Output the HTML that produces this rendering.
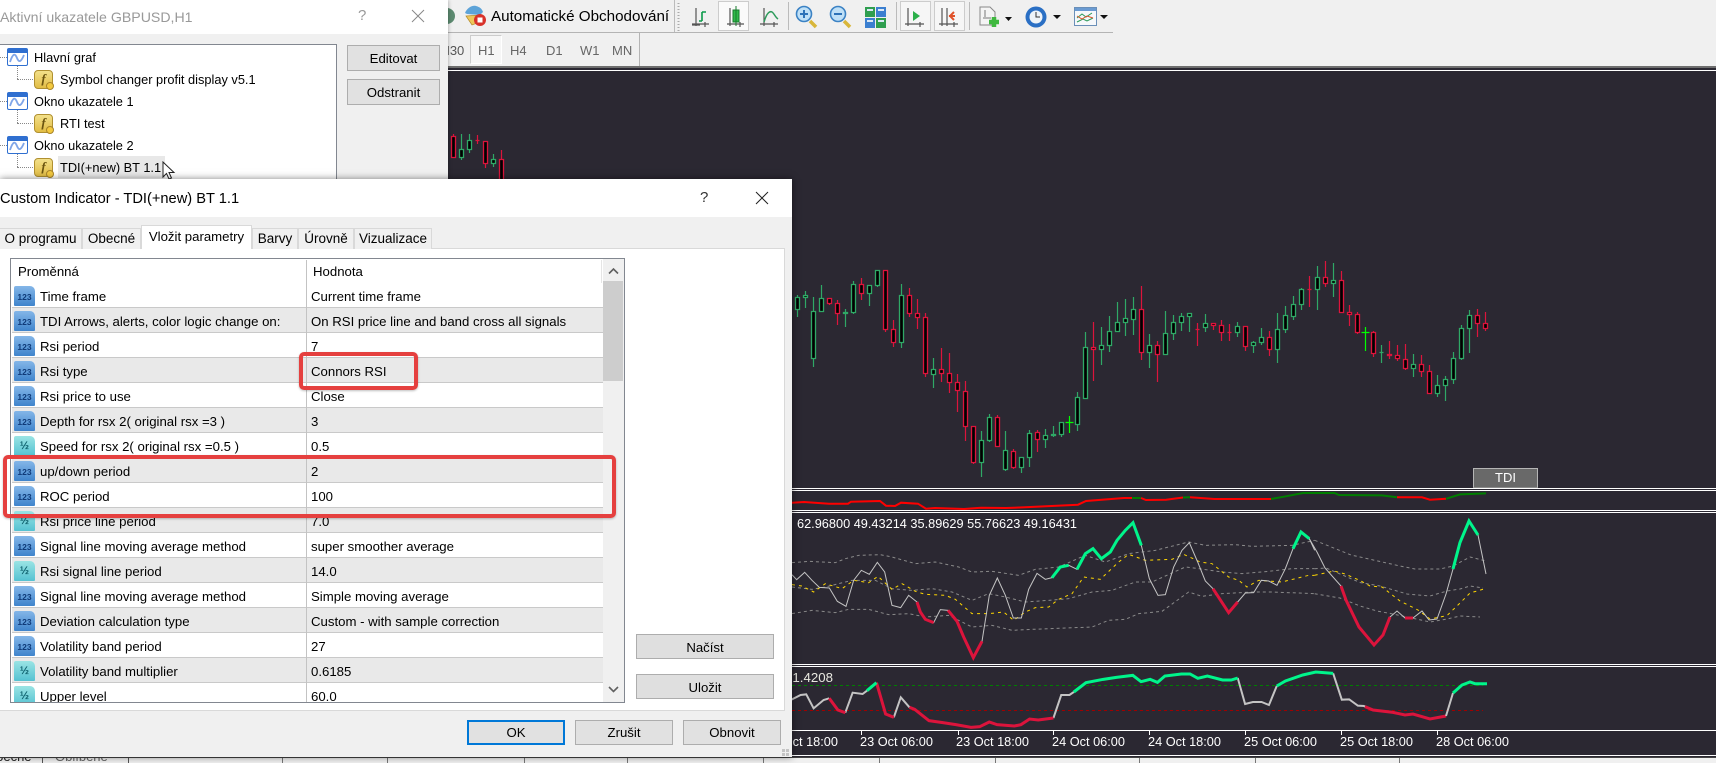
<!DOCTYPE html>
<html><head><meta charset="utf-8"><style>
html,body{margin:0;padding:0}
body{width:1716px;height:763px;position:relative;overflow:hidden;background:#f0f0f0;font-family:"Liberation Sans",sans-serif;color:#000}
.t{position:absolute;white-space:nowrap;font-size:13.2px;line-height:16px}
.btn{position:absolute;box-sizing:border-box;background:#e1e1e1;border:1px solid #adadad;font-size:13.2px;text-align:center;line-height:25px;color:#000}
.tab{position:absolute;box-sizing:border-box;top:228px;height:21px;background:#f0f0f0;border:1px solid #d9d9d9;border-bottom:0;font-size:13.5px;text-align:center;line-height:19px}
.row{position:absolute;left:11px;width:591px;height:25px;box-sizing:border-box;border-bottom:1px solid #c9c9c9;background:#fff;overflow:hidden}
.row.s{background:#e9e9e9}
.row b{position:absolute;font-weight:400;font-size:13.2px;line-height:27px;white-space:nowrap;left:28px;top:0}
.row u{position:absolute;text-decoration:none;font-size:13.2px;line-height:27px;white-space:nowrap;left:299px;top:0}
.row i{position:absolute;left:2px;top:3px;width:21px;height:20px;box-sizing:border-box;border-radius:2px 5px 1px 1px;background:linear-gradient(#84b6e8,#3f84cc);font:700 8.5px/10px "Liberation Sans",sans-serif;color:#0f3a78;text-align:center;padding-top:6px}
.row i.h{background:linear-gradient(#9ae4e4,#55c2d2);font-size:11px;color:#0d5f6b;padding-top:5px}
.coldiv{position:absolute;width:1px;background:#c3c3c3}
.tree{position:absolute;font-size:12.8px;line-height:16px;white-space:nowrap}
.f{position:absolute;width:19px;height:19px;box-sizing:border-box;border:1px solid #b09030;border-radius:4px;background:linear-gradient(#f3e08a,#e2bd45);font:italic 700 13px/16px "Liberation Serif",serif;text-align:center;color:#6b5410}
.f:after{content:"";position:absolute;right:-2px;bottom:-2px;width:6px;height:6px;border-radius:50%;background:#f3c93f;border:1px solid #a8842a}
.tf{position:absolute;top:43px;font-size:13px;line-height:16px;color:#666}
.dot{position:absolute;border-color:#888;border-style:dotted;border-width:0}
</style></head><body>

<!-- chart -->
<div style="position:absolute;left:448px;top:66px;width:1268px;height:691px;background:#2b2832"></div>
<div style="position:absolute;left:448px;top:66px;width:1268px;height:2px;background:#6e6e6e"></div>
<svg width="1716" height="763" style="position:absolute;left:0;top:0">
<g fill="#fff" shape-rendering="crispEdges">
<rect x="448" y="70" width="1268" height="1"/>
<rect x="448" y="488" width="1268" height="1"/><rect x="448" y="490" width="1268" height="1"/>
<rect x="448" y="510" width="1268" height="1"/><rect x="448" y="512" width="1268" height="1"/>
<rect x="448" y="664" width="1268" height="1"/><rect x="448" y="666" width="1268" height="1"/>
<rect x="448" y="730" width="1268" height="1"/><rect x="448" y="755" width="1268" height="1"/>
<rect x="861" y="731" width="1" height="4"/><rect x="958" y="731" width="1" height="4"/><rect x="1053" y="731" width="1" height="4"/><rect x="1149" y="731" width="1" height="4"/><rect x="1245" y="731" width="1" height="4"/><rect x="1341" y="731" width="1" height="4"/><rect x="1437" y="731" width="1" height="4"/>
</g>
<path fill="none" stroke="#2fa866" stroke-width="1.2" d="M461.500 134V160M469.500 134V153M493.500 154V167M797.500 295V317M805.500 291V308M813.500 297V367M821.500 285V312M845.500 309V327M853.500 281V314M869.500 285V306M877.500 270V287M901.500 284V348M933.500 358V388M981.500 431V477M989.500 414V442M1005.500 431V471M1021.500 457V473M1029.500 430V467M1045.500 429V448M1053.500 426V437M1061.500 422V437M1077.500 392V431M1085.500 332V399M1101.500 327V365M1109.500 316V352M1117.500 302V332M1125.500 299V336M1133.500 297V335M1149.500 334V368M1165.500 311V355M1173.500 315V340M1181.500 313V331M1189.500 313V332M1205.500 314V332M1237.500 322V337M1253.500 341V353M1261.500 328V345M1277.500 313V363M1285.500 306V333M1293.500 296V320M1301.500 288V310M1317.500 266V310M1333.500 263V297M1381.500 345V363M1413.500 354V377M1437.500 375V397M1445.500 376V401M1453.500 352V384M1461.500 325V360M1469.500 310V353"/>
<path fill="none" stroke="#dc143c" stroke-width="1.2" d="M453.500 134V158M477.500 135V144M485.500 141V168M829.500 298V305M837.500 300V325M861.500 278V300M885.500 270V332M893.500 320V347M909.500 288V317M917.500 299V329M925.500 313V377M941.500 348V382M949.500 353V393M957.500 374V412M965.500 381V441M973.500 426V464M997.500 415V447M1013.500 449V469M1037.500 430V452M1093.500 322V381M1141.500 286V360M1157.500 341V382M1197.500 323V346M1213.500 323V330M1221.500 320V341M1229.500 324V341M1245.500 326V351M1269.500 331V356M1309.500 276V307M1325.500 261V287M1341.500 271V313M1349.500 305V326M1357.500 312V334M1373.500 331V357M1389.500 341V359M1397.500 345V361M1405.500 344V370M1421.500 355V377M1429.500 365V394M1477.500 309V337M1485.500 312V331M501.500 150V160"/>
<path fill="none" stroke="#0f0" stroke-width="1.2" d="M1069.500 416V433M1065.500 422.500h8M1365.500 327V351M1361.500 332.500h8"/>
<path fill="#000" stroke="#2fa866" stroke-width="1.3" d="M459.500 149.500h4v8h-4zM467.500 140.500h4v9h-4zM491.500 159.500h4v4h-4zM795.500 297.500h4v12h-4zM803.500 295.500h4v2h-4zM811.500 311.500h4v47h-4zM819.500 298.500h4v13h-4zM843.500 312.500h4v1h-4zM851.500 284.500h4v28h-4zM867.500 285.500h4v8h-4zM875.500 270.500h4v15h-4zM899.500 295.500h4v47h-4zM931.500 369.500h4v5h-4zM979.500 440.500h4v22h-4zM987.500 417.500h4v23h-4zM1003.500 450.500h4v19h-4zM1019.500 457.500h4v10h-4zM1027.500 433.500h4v24h-4zM1043.500 435.500h4v4h-4zM1051.500 434.500h4v1h-4zM1059.500 422.500h4v12h-4zM1075.500 397.500h4v27h-4zM1083.500 347.500h4v51h-4zM1099.500 345.500h4v4h-4zM1107.500 331.500h4v14h-4zM1115.500 322.500h4v9h-4zM1123.500 318.500h4v4h-4zM1131.500 309.500h4v10h-4zM1147.500 345.500h4v7h-4zM1163.500 333.500h4v21h-4zM1171.500 322.500h4v11h-4zM1179.500 316.500h4v6h-4zM1187.500 313.500h4v3h-4zM1203.500 323.500h4v4h-4zM1235.500 326.500h4v6h-4zM1251.500 342.500h4v3h-4zM1259.500 337.500h4v5h-4zM1275.500 329.500h4v20h-4zM1283.500 315.500h4v14h-4zM1291.500 304.500h4v12h-4zM1299.500 289.500h4v15h-4zM1315.500 277.500h4v12h-4zM1331.500 280.500h4v3h-4zM1379.500 352.500h4v0h-4zM1411.500 364.500h4v4h-4zM1435.500 385.500h4v8h-4zM1443.500 379.500h4v6h-4zM1451.500 358.500h4v21h-4zM1459.500 328.500h4v30h-4zM1467.500 315.500h4v13h-4z"/>
<path fill="#000" stroke="#dc143c" stroke-width="1.3" d="M451.500 136.500h4v21h-4zM475.500 140.500h4v0h-4zM483.500 141.500h4v22h-4zM827.500 298.500h4v5h-4zM835.500 303.500h4v10h-4zM859.500 284.500h4v9h-4zM883.500 270.500h4v59h-4zM891.500 329.500h4v13h-4zM907.500 295.500h4v18h-4zM915.500 313.500h4v4h-4zM923.500 317.500h4v56h-4zM939.500 369.500h4v4h-4zM947.500 373.500h4v9h-4zM955.500 382.500h4v8h-4zM963.500 391.500h4v35h-4zM971.500 426.500h4v36h-4zM995.500 417.500h4v29h-4zM1011.500 451.500h4v16h-4zM1035.500 432.500h4v7h-4zM1091.500 347.500h4v2h-4zM1139.500 309.500h4v43h-4zM1155.500 345.500h4v9h-4zM1195.500 329.500h4v0h-4zM1211.500 323.500h4v2h-4zM1219.500 325.500h4v7h-4zM1227.500 332.500h4v0h-4zM1243.500 326.500h4v20h-4zM1267.500 337.500h4v12h-4zM1307.500 289.500h4v0h-4zM1323.500 277.500h4v6h-4zM1339.500 280.500h4v32h-4zM1347.500 312.500h4v2h-4zM1355.500 314.500h4v18h-4zM1371.500 332.500h4v21h-4zM1387.500 354.500h4v1h-4zM1395.500 355.500h4v3h-4zM1403.500 359.500h4v9h-4zM1419.500 364.500h4v7h-4zM1427.500 371.500h4v22h-4zM1475.500 315.500h4v8h-4zM1483.500 323.500h4v5h-4zM499.500 159.500h4v30h-4z"/>
<path fill="none" stroke="#007f00" d="M792 685.500H1483" stroke-dasharray="3 3" shape-rendering="crispEdges"/>
<path fill="none" stroke="#a00000" d="M792 710.500H1483" stroke-dasharray="3 3" shape-rendering="crispEdges"/>
</svg>

<svg width="1716" height="763" style="position:absolute;left:0;top:0">
<style>.n *{vector-effect:non-scaling-stroke;fill:none}</style>
<!-- indicator 1 -->
<g class="n" stroke-width="2">
<polyline stroke="#f00" points="792,502.700 804,502 829,503.700 848,503.700 851,501.700 880,501 886,505.700 895,506 901,502.700 918,503.700 926,508.700 935,508 964,509 981,507.700 1006,508 1025,507.300 1078,504.700 1086,501 1124,498 1132,498"/>
<polyline stroke="#007f00" points="1132,498 1141,498"/>
<polyline stroke="#f00" points="1141,498 1146,500 1166,499.700 1183,497.500"/>
<polyline stroke="#007f00" points="1183,497.500 1190,497.300"/>
<polyline stroke="#f00" points="1190,497.300 1214.500,499 1271,499"/>
<polyline stroke="#007f00" points="1271,499 1284,496.700 1303,493 1334.500,493 1339,495 1382,495.400 1397,497.300"/>
<polyline stroke="#f00" points="1397,497.300 1422,497.300 1430,499.700 1446,498.800"/>
<polyline stroke="#007f00" points="1446,498.800 1460,494.400 1486,493.400"/>
</g>
<!-- TDI bands -->
<g class="n" transform="translate(792 512) scale(.33333)">
<g stroke="#8a8a8a" stroke-width="1" stroke-dasharray="3 3">
<polyline points="0,152 50,148 130,152 160,140 200,130 265,128 300,135 370,155 430,150 500,165 540,180 600,178 680,190 730,172 800,165 880,130 940,150 1010,125 1090,115 1190,90 1240,100 1330,98 1380,103 1500,100 1568,85"/>
<polyline points="0,225 60,232 100,225 180,205 250,205 300,230 360,235 420,230 480,240 540,265 590,245 640,255 700,270 770,265 830,260 900,240 960,235 1030,210 1080,210 1180,165 1220,170 1290,180 1350,185 1430,178 1500,170 1568,170"/>
<polyline points="0,305 60,295 130,302 170,292 230,292 290,308 350,305 400,315 470,310 540,345 600,340 660,355 720,352 900,345 950,325 1000,322 1040,305 1110,298 1190,240 1230,253 1290,245 1380,240 1440,240 1568,245"/>
</g>
<polyline stroke="#ffd700" stroke-width="1" stroke-dasharray="3 4" points="0,218 30,222 65,240 100,215 150,230 185,205 230,212 258,193 300,232 330,215 370,238 400,247 460,250 490,262 540,305 590,305 635,300 665,325 700,300 730,287 770,285 800,262 840,245 875,195 925,202 980,150 1010,127 1060,145 1140,142 1175,127 1225,150 1260,155 1310,195 1340,205 1365,225 1400,205 1470,210 1550,190 1568,190"/>
<polyline stroke="#c4c4c4" stroke-width="1" points="0,188 14,203 38,181 60,205 82,226 112,228 136,268 162,283 185,205 208,175 232,187 256,151 278,180 300,280 326,287 350,250 375,270 385,300 400,322 425,332 445,293 468,295 495,328 515,375 544,437 570,388 592,250 616,198 640,250 664,318 688,318 710,232 735,184 760,202 780,197 805,165 830,160 855,172 880,125 903,110 928,140 955,120 975,85 1000,55 1023,32 1048,100 1072,200 1098,250 1120,248 1145,165 1170,115 1192,92 1217,150 1240,207 1263,230 1310,302 1337,270 1360,243 1385,242 1408,205 1430,207 1455,220 1480,170 1503,110 1527,60 1552,80 1568,115"/>
<g stroke="#dc143c" stroke-width="3">
<polyline points="375,270 385,300 400,322 425,332"/>
<polyline points="468,295 495,328 515,375 544,437 570,388"/>
<polyline points="1263,230 1310,302 1337,270"/>
</g>
<g stroke="#00f58b" stroke-width="3">
<polyline points="780,197 805,165 830,160"/>
<polyline points="855,172 880,125 903,110 928,140 955,120 975,85 1000,55 1023,32 1048,100"/>
<polyline points="1503,110 1527,60 1552,80"/>
</g>
</g>
<g class="n">
<g stroke="#8a8a8a" stroke-width="1" stroke-dasharray="3 3">
<polyline points="1314.700,540.300 1351,555 1360,557 1400,566 1415,569 1440,569 1453,566 1470,557 1486,561"/>
<polyline points="1314.700,568.700 1326,568 1360,582.500 1380,586 1407,594 1430,596 1447,591 1460,589 1470,586 1483,588"/>
<polyline points="1314.700,593.700 1340,598 1360,606 1377,611 1393,614 1430,622 1447,619 1460,616 1480,617"/>
</g>
<polyline stroke="#ffd700" stroke-width="1" stroke-dasharray="3 4" points="1314.700,575.300 1334,571 1345,574 1360,580.500 1370,586 1382,587 1400,601 1418,610 1430,619 1447,615.600 1460,603 1470,593 1484,589"/>
<polyline stroke="#c4c4c4" stroke-width="1" points="1309.300,538.700 1317,552 1325,568 1341,586 1346,600 1359,627 1374,645 1383,635 1390,617 1397,611 1405,618 1413,618 1422,611 1429,620 1437,619 1446,594 1453,569 1460,542.500 1469,521 1478,535 1486,574"/>
<polyline stroke="#dc143c" stroke-width="3" points="1341,586 1346,600 1359,627 1374,645 1383,635 1390,617"/>
<polyline stroke="#dc143c" stroke-width="3" points="1405,618 1413,618"/>
<polyline stroke="#00f58b" stroke-width="3" points="1453,569 1460,542.500 1469,521 1478,535"/>
</g>
<!-- bottom window -->
<g class="n" transform="translate(700 600) scale(.43365 .33333)">
<g stroke="#c4c4c4" stroke-width="2">
<polyline points="180,300 212,298 232,285 245,283 262,325 285,300 298,295"/>
<polyline points="335,338 352,278 375,282 385,272"/>
<polyline points="447,352 463,292 483,322"/>
<polyline points="815,354 833,285 852,285 862,276"/>
<polyline points="1240,234 1257,312 1275,306 1295,306 1312,315 1330,258"/>
<polyline points="1460,220 1480,299 1497,298 1517,317 1532,318"/>
</g>
<g stroke="#dc143c" stroke-width="3">
<polyline points="298,295 318,330 335,338"/>
<polyline points="407,248 428,342 447,352"/>
<polyline points="483,322 495,328 528,362 560,368 590,374 625,382 645,380 667,366 685,374 725,378 740,374 760,357 780,360 815,354"/>
</g>
<g stroke="#00f58b" stroke-width="3">
<polyline points="385,272 407,248"/>
<polyline points="862,276 890,248 930,238 960,232 998,226 1017,245 1038,238 1055,247 1072,228 1110,222 1130,222 1148,235 1170,228 1205,240 1225,240 1240,234"/>
<polyline points="1330,258 1350,243 1390,225 1420,216 1460,220"/>
</g>
</g>
<g class="n">
<polyline stroke="#c4c4c4" stroke-width="2" points="1364,706 1365,706.600"/>
<polyline stroke="#dc143c" stroke-width="3" points="1365,706.600 1373,710 1393,712.400 1405,715 1413,714 1430,719 1446,716"/>
<polyline stroke="#c4c4c4" stroke-width="2" points="1446,716 1453,693"/>
<polyline stroke="#00f58b" stroke-width="3" points="1453,693 1462,685 1470,682 1475,683.700 1487,683.700"/>
</g>
<g fill="#fff" font-family="Liberation Sans, sans-serif" font-size="13">
<text x="797" y="528" textLength="280" lengthAdjust="spacingAndGlyphs">62.96800 49.43214 35.89629 55.76623 49.16431</text>
<text x="785" y="682" textLength="48" lengthAdjust="spacingAndGlyphs" fill="#e8e8e0">51.4208</text>
<text x="765" y="746" textLength="73" lengthAdjust="spacingAndGlyphs">22 Oct 18:00</text>
<text x="860" y="746" textLength="73" lengthAdjust="spacingAndGlyphs">23 Oct 06:00</text>
<text x="956" y="746" textLength="73" lengthAdjust="spacingAndGlyphs">23 Oct 18:00</text>
<text x="1052" y="746" textLength="73" lengthAdjust="spacingAndGlyphs">24 Oct 06:00</text>
<text x="1148" y="746" textLength="73" lengthAdjust="spacingAndGlyphs">24 Oct 18:00</text>
<text x="1244" y="746" textLength="73" lengthAdjust="spacingAndGlyphs">25 Oct 06:00</text>
<text x="1340" y="746" textLength="73" lengthAdjust="spacingAndGlyphs">25 Oct 18:00</text>
<text x="1436" y="746" textLength="73" lengthAdjust="spacingAndGlyphs">28 Oct 06:00</text>
</g>
</svg>

<!-- TDI button -->
<div style="position:absolute;left:1473px;top:468px;width:65px;height:20px;box-sizing:border-box;background:#696969;border:1px solid #b5b5b5;border-bottom-color:#8a8a8a;color:#fff;font-size:13px;line-height:18px;text-align:center">TDI</div>

<!-- toolbar -->
<div style="position:absolute;left:448px;top:32px;width:665px;height:1px;background:#b4b4b4"></div>
<div style="position:absolute;left:639px;top:33px;width:1px;height:33px;background:#b4b4b4"></div>
<div style="position:absolute;left:470px;top:35px;width:32px;height:29px;box-sizing:border-box;border:1px solid #ccc;border-right-color:#fff;border-bottom-color:#fff;background:#f6f6f6"></div>
<div class="tf" style="left:439px;color:#555">M30</div>
<div class="tf" style="left:478px">H1</div><div class="tf" style="left:510px">H4</div><div class="tf" style="left:546px">D1</div><div class="tf" style="left:580px">W1</div><div class="tf" style="left:612px">MN</div>
<div class="t" style="left:491px;top:8px;font-size:15.2px;line-height:18px">Automatické Obchodování</div>
<div style="position:absolute;left:718px;top:1px;width:31px;height:30px;box-sizing:border-box;background:#fafafa;border:1px solid #ccc"></div>
<div style="position:absolute;left:900px;top:1px;width:31px;height:30px;box-sizing:border-box;background:#f6f6f6;border:1px solid #ccc"></div>
<div style="position:absolute;left:934px;top:1px;width:31px;height:30px;box-sizing:border-box;background:#f6f6f6;border:1px solid #ccc"></div>
<svg width="1120" height="34" style="position:absolute;left:0;top:0">
<circle cx="447" cy="16" r="8" fill="#5c8a70"/>
<!-- auto trading -->
<path d="M465 13c2-5 7-8 11-7s6 3 7 6l-3 3-13-1z" fill="#5da3d8"/><path d="M466 16l15-1-1 7-8 3z" fill="#eec75a" stroke="#b28a2a" stroke-width=".7"/><circle cx="480" cy="20" r="6" fill="#d8322a"/><rect x="477.500" y="17.500" width="5" height="5" fill="#fff"/>
<path d="M678.500 3V31" stroke="#aaa" stroke-width="2" stroke-dasharray="1 2"/><path d="M674.500 0V32M788.500 2V30M896.500 2V30M969.500 2V30" stroke="#bbb"/>
<g fill="none" stroke="#555" stroke-width="1.200">
<path d="M696 8V26M700 25H692M692 24H709M705 27V22"/><path d="M730 8V26M727 24H744M740 27V22"/>
<path d="M764 8V26M760 24H778M774 27V22"/>
<path d="M908 8V26M905 24H924M920 27V22"/><path d="M942 8V26M939 24H958M954 27V22M947 8V26"/>
</g>
<path d="M702 12V21M702 12h4M699 21h3" stroke="#0b9a4a" stroke-width="1.600" fill="none"/>
<rect x="733" y="10" width="6" height="12" fill="#2fbb4a" stroke="#177a2c"/><path d="M736 6V26" stroke="#177a2c"/>
<path d="M764 22c3-10 6-11 8-10s3 5 6 7" fill="none" stroke="#2c9a5a" stroke-width="1.500"/>
<path d="M913 11l7 5-7 5z" fill="#2cb04a"/><path d="M949 16h6M954 12l-4 4 4 4" stroke="#e0522a" stroke-width="2" fill="none"/>
<!-- zoom -->
<path d="M810 21l6 6" stroke="#d8b63a" stroke-width="3.500"/><circle cx="804" cy="14" r="7.500" fill="#bfe0f7" stroke="#3b82c4" stroke-width="1.600"/><path d="M800 14h8M804 10v8" stroke="#2d72b8" stroke-width="2"/>
<path d="M844 21l6 6" stroke="#d8b63a" stroke-width="3.500"/><circle cx="838" cy="14" r="7.500" fill="#bfe0f7" stroke="#3b82c4" stroke-width="1.600"/><path d="M834 14h8" stroke="#2d72b8" stroke-width="2"/>
<!-- template -->
<rect x="865" y="7" width="10" height="10" fill="#2f9e4f"/><rect x="876" y="7" width="10" height="10" fill="#3b7fd0"/><rect x="865" y="18" width="10" height="10" fill="#3b7fd0"/><rect x="876" y="18" width="10" height="10" fill="#2f9e4f"/>
<path d="M867 10h6M878 10h6M867 21h6M878 21h6" stroke="#dbe8f5" stroke-width="2"/>
<!-- new -->
<path d="M980 7h10l5 5v13h-15z" fill="#f4f4f4" stroke="#888"/><path d="M985 17V10M983 18h8" stroke="#777" fill="none"/><path d="M994 17v10M989 22h10" stroke="#3fb83f" stroke-width="4.500"/>
<path d="M1005 17h7l-3.500 4z" fill="#111"/>
<!-- clock -->
<circle cx="1036" cy="17" r="10.500" fill="#2a6fc4"/><circle cx="1036" cy="17" r="6.500" fill="#eef3f8"/><path d="M1036 12v5h4" stroke="#333" fill="none"/>
<path d="M1053 15h8l-4 4z" fill="#111"/>
<!-- chart -->
<rect x="1074.500" y="7.500" width="22" height="18" fill="#f6f8fb" stroke="#6a8fb8"/><rect x="1075" y="8" width="21" height="3" fill="#6a9bd2"/><path d="M1077 18l5-4 4 3 6-4M1077 22l6-3 4 2 6-3" fill="none" stroke="#2c9a5a"/><path d="M1077 16l5 3 5-3 6 2" fill="none" stroke="#d8562a"/>
<path d="M1100 15h8l-4 4z" fill="#111"/>
</svg>

<!-- bottom strip -->
<div style="position:absolute;left:0;top:757px;width:1716px;height:1px;background:#444"></div>
<div style="position:absolute;left:0;top:758px;width:1716px;height:5px;background:#f0f0f0;overflow:hidden;color:#555;font-size:13px">
<span style="position:absolute;left:-14px;top:-9px;color:#222">Obecné</span><span style="position:absolute;left:55px;top:-9px;color:#666">Oblíbené</span>
<i style="position:absolute;left:42px;top:0;width:1px;height:5px;background:#555"></i><i style="position:absolute;left:128px;top:0;width:1px;height:5px;background:#555"></i><i style="position:absolute;left:282px;top:0;width:1px;height:5px;background:#777"></i><i style="position:absolute;left:387px;top:0;width:1px;height:5px;background:#777"></i><i style="position:absolute;left:524px;top:0;width:1px;height:5px;background:#777"></i><i style="position:absolute;left:627px;top:0;width:1px;height:5px;background:#777"></i><i style="position:absolute;left:763px;top:0;width:1px;height:5px;background:#777"></i><i style="position:absolute;left:879px;top:0;width:1px;height:5px;background:#777"></i><i style="position:absolute;left:995px;top:0;width:1px;height:5px;background:#777"></i><i style="position:absolute;left:1139px;top:0;width:1px;height:5px;background:#777"></i><i style="position:absolute;left:1255px;top:0;width:1px;height:5px;background:#777"></i><i style="position:absolute;left:1399px;top:0;width:1px;height:5px;background:#777"></i>
</div>

<!-- dialog 1 -->
<div style="position:absolute;left:0;top:0;width:448px;height:180px;background:#f0f0f0;box-shadow:0 0 4px rgba(0,0,0,.35)">
<div style="position:absolute;left:0;top:0;width:448px;height:34px;background:#fff"></div>
<div class="t" style="left:0;top:8px;font-size:14.15px;line-height:18px;color:#999">Aktivní ukazatele GBPUSD,H1</div>
<div class="t" style="left:358px;top:7px;font-size:15px;line-height:18px;color:#999">?</div>
<svg width="14" height="14" style="position:absolute;left:411px;top:9px"><path d="M1 1L13 13M13 1L1 13" stroke="#888" fill="none"/></svg>
<div style="position:absolute;left:-1px;top:44px;width:338px;height:140px;box-sizing:border-box;border:1px solid #828790;background:#fff"></div>
<div class="dot" style="left:0;top:57px;width:7px;border-top-width:1px"></div>
<div class="dot" style="left:0;top:101px;width:7px;border-top-width:1px"></div>
<div class="dot" style="left:0;top:145px;width:7px;border-top-width:1px"></div>
<div class="dot" style="left:17px;top:66px;height:13px;border-left-width:1px"></div><div class="dot" style="left:17px;top:79px;width:16px;border-top-width:1px"></div>
<div class="dot" style="left:17px;top:110px;height:13px;border-left-width:1px"></div><div class="dot" style="left:17px;top:123px;width:16px;border-top-width:1px"></div>
<div class="dot" style="left:17px;top:154px;height:13px;border-left-width:1px"></div><div class="dot" style="left:17px;top:167px;width:16px;border-top-width:1px"></div>
<svg width="40" height="170" style="position:absolute;left:0;top:0">
<g id="w"><rect x="7.500" y="48.500" width="20" height="17" rx="1.500" fill="#fff" stroke="#2f6fd0"/><rect x="8" y="49" width="19" height="4" fill="#2f6fd0"/><path d="M10 62c3-9 5-9 7-4s4 4 7-3" fill="none" stroke="#7fa5e8" stroke-width="1.800"/></g>
<use href="#w" y="44"/><use href="#w" y="88"/>
</svg>
<div style="position:absolute;left:58px;top:156px;width:107px;height:22px;background:#e8e8e8"></div>
<div class="tree" style="left:34px;top:50px">Hlavní graf</div>
<div class="tree" style="left:60px;top:72px">Symbol changer profit display v5.1</div>
<div class="tree" style="left:34px;top:94px">Okno ukazatele 1</div>
<div class="tree" style="left:60px;top:116px">RTI test</div>
<div class="tree" style="left:34px;top:138px">Okno ukazatele 2</div>
<div class="tree" style="left:60px;top:160px">TDI(+new) BT 1.1</div>
<div class="f" style="left:34px;top:70px">f</div><div class="f" style="left:34px;top:114px">f</div><div class="f" style="left:34px;top:158px">f</div>
<svg width="16" height="22" style="position:absolute;left:162px;top:161px"><path d="M1 1V16L4.500 12.500 7 18 9.500 17 7 11.500H12z" fill="#fff" stroke="#222"/></svg>
<div class="btn" style="left:347px;top:45px;width:93px;height:26px">Editovat</div>
<div class="btn" style="left:347px;top:79px;width:93px;height:26px">Odstranit</div>
</div>

<!-- dialog 2 -->
<div style="position:absolute;left:0;top:179px;width:792px;height:578px;background:#f0f0f0;box-shadow:0 0 7px rgba(0,0,0,.5)"></div>
<div style="position:absolute;left:0;top:179px;width:792px;height:38px;background:#fff"></div>
<div class="t" style="left:0;top:190px;font-size:14.65px;line-height:18px">Custom Indicator - TDI(+new) BT 1.1</div>
<div class="t" style="left:700px;top:189px;font-size:15px;line-height:18px;color:#333">?</div>
<svg width="14" height="14" style="position:absolute;left:755px;top:191px"><path d="M1 1L13 13M13 1L1 13" stroke="#222" fill="none"/></svg>
<div style="position:absolute;left:0;top:248px;width:785px;height:463px;box-sizing:border-box;background:#fff;border:1px solid #d9d9d9;border-left:0"></div>
<div class="tab" style="left:0;width:82px;border-left:0">O programu</div>
<div class="tab" style="left:82px;width:59px">Obecné</div>
<div class="tab" style="left:252px;width:46px">Barvy</div>
<div class="tab" style="left:298px;width:56px">Úrovně</div>
<div class="tab" style="left:354px;width:78px">Vizualizace</div>
<div class="tab" style="left:141px;width:111px;top:225px;height:24px;background:#fff;line-height:21px;font-size:13.2px">Vložit parametry</div>

<!-- list -->
<div style="position:absolute;left:10px;top:258px;width:615px;height:445px;box-sizing:border-box;border:1px solid #828790;background:#fff;overflow:hidden">
<div class="t" style="left:7px;top:5px">Proměnná</div><div class="t" style="left:302px;top:5px">Hodnota</div>
<div style="position:absolute;left:590px;top:1px;width:1px;height:23px;background:#e5e5e5"></div>
<div class="row" style="left:1px;top:24px"><i>123</i><b>Time frame</b><u>Current time frame</u></div>
<div class="row s" style="left:1px;top:49px"><i>123</i><b>TDI Arrows, alerts, color logic change on:</b><u>On RSI price line and band cross all signals</u></div>
<div class="row" style="left:1px;top:74px"><i>123</i><b>Rsi period</b><u>7</u></div>
<div class="row s" style="left:1px;top:99px"><i>123</i><b>Rsi type</b><u>Connors RSI</u></div>
<div class="row" style="left:1px;top:124px"><i>123</i><b>Rsi price to use</b><u>Close</u></div>
<div class="row s" style="left:1px;top:149px"><i>123</i><b>Depth for rsx 2( original rsx =3 )</b><u>3</u></div>
<div class="row" style="left:1px;top:174px"><i class="h">½</i><b>Speed for rsx 2( original rsx =0.5 )</b><u>0.5</u></div>
<div class="row s" style="left:1px;top:199px"><i>123</i><b>up/down period</b><u>2</u></div>
<div class="row" style="left:1px;top:224px"><i>123</i><b>ROC period</b><u>100</u></div>
<div class="row s" style="left:1px;top:249px"><i class="h">½</i><b>Rsi price line period</b><u>7.0</u></div>
<div class="row" style="left:1px;top:274px"><i>123</i><b>Signal line moving average method</b><u>super smoother average</u></div>
<div class="row s" style="left:1px;top:299px"><i class="h">½</i><b>Rsi signal line period</b><u>14.0</u></div>
<div class="row" style="left:1px;top:324px"><i>123</i><b>Signal line moving average method</b><u>Simple moving average</u></div>
<div class="row s" style="left:1px;top:349px"><i>123</i><b>Deviation calculation type</b><u>Custom - with sample correction</u></div>
<div class="row" style="left:1px;top:374px"><i>123</i><b>Volatility band period</b><u>27</u></div>
<div class="row s" style="left:1px;top:399px"><i class="h">½</i><b>Volatility band multiplier</b><u>0.6185</u></div>
<div class="row" style="left:1px;top:424px;border-bottom:0"><i class="h">½</i><b>Upper level</b><u>60.0</u></div>
<div class="coldiv" style="left:295px;top:1px;height:442px"></div>
<div style="position:absolute;left:592px;top:0;width:21px;height:443px;background:#f0f0f0"></div>
<div style="position:absolute;left:592px;top:22px;width:20px;height:100px;background:#cdcdcd"></div>
<svg width="21" height="443" style="position:absolute;left:592px;top:0"><path d="M6 14.500l4.500-4.500 4.500 4.500M6 428l4.500 4.500 4.500-4.500" fill="none" stroke="#606060" stroke-width="1.600"/></svg>
</div>

<div class="btn" style="left:636px;top:634px;width:138px;height:25px;line-height:25px;background:#dfdfdf">Načíst</div>
<div class="btn" style="left:636px;top:674px;width:138px;height:25px;line-height:25px;background:#dfdfdf">Uložit</div>
<div class="btn" style="left:467px;top:720px;width:98px;height:25px;line-height:21px;border:2px solid #0078d7">OK</div>
<div class="btn" style="left:575px;top:720px;width:98px;height:25px;line-height:24px">Zrušit</div>
<div class="btn" style="left:683px;top:720px;width:98px;height:25px;line-height:24px">Obnovit</div>
<svg width="9" height="9" style="position:absolute;left:781px;top:748px"><path d="M1 1h3v3H1zM5 1h3v3H5zM1 5h3v3H1zM5 5h3v3H5z" fill="#c4c4c4"/></svg>

<!-- highlights -->
<div style="position:absolute;left:299px;top:352px;width:119px;height:38px;box-sizing:border-box;border:4px solid #e5403f;border-radius:5px;box-shadow:0 1px 2px rgba(0,0,0,.25)"></div>
<div style="position:absolute;left:3px;top:455px;width:613px;height:63px;box-sizing:border-box;border:4px solid #e5403f;border-radius:5px;box-shadow:0 1px 2px rgba(0,0,0,.25)"></div>
</body></html>
